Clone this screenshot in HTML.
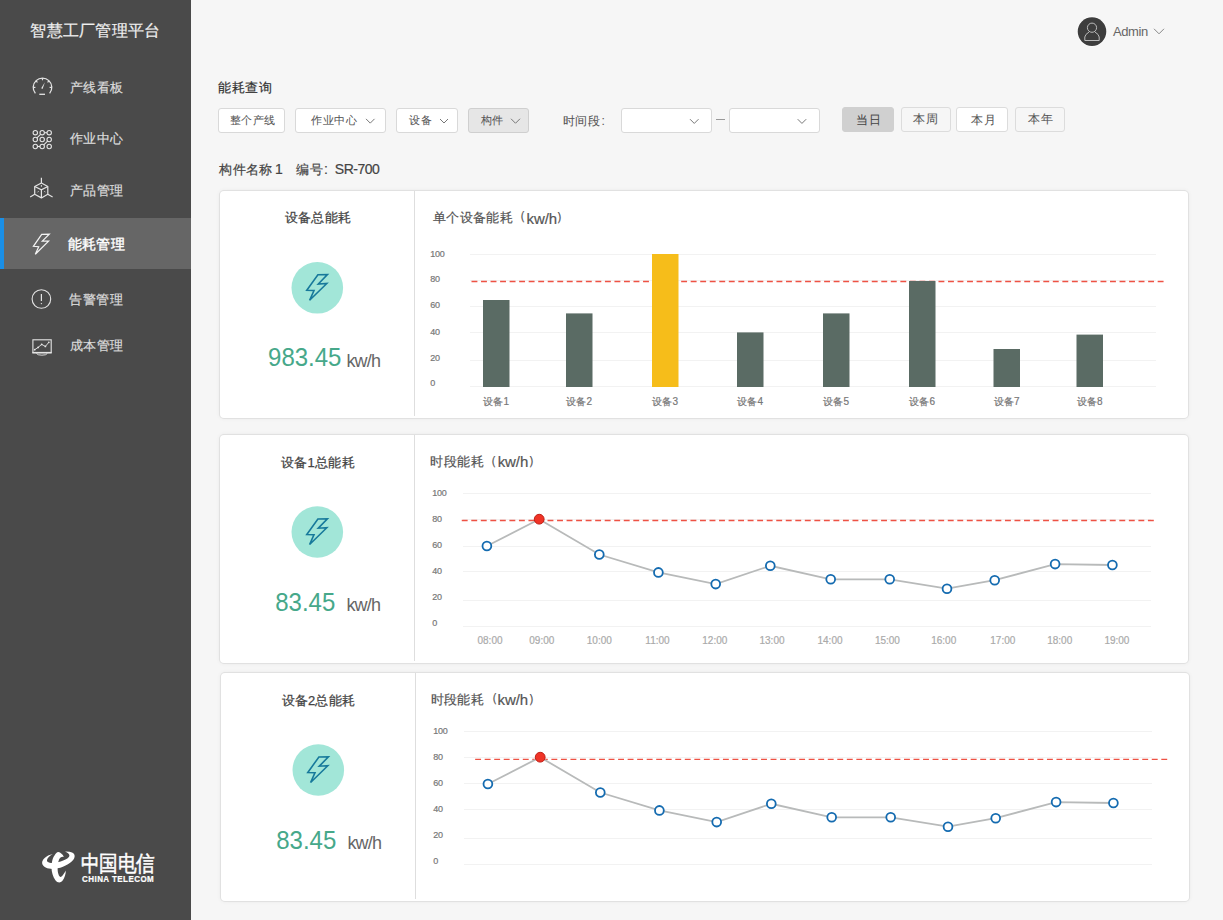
<!DOCTYPE html><html><head><meta charset="utf-8"><style>
html,body{margin:0;padding:0;}
body{width:1223px;height:920px;overflow:hidden;background:#f6f6f6;position:relative;font-family:"Liberation Sans",sans-serif;}
.t{position:absolute;white-space:nowrap;line-height:1;-webkit-text-stroke:0.2px currentColor;}
.c{width:200px;text-align:center;}
.sb{position:absolute;left:0;top:0;width:191px;height:920px;background:#4a4a4a;}
.act{position:absolute;left:0;top:218px;width:191px;height:51px;background:#666666;}
.actbar{position:absolute;left:0;top:218px;width:4px;height:51px;background:#1a8fe6;}
.box{position:absolute;box-sizing:border-box;border:1px solid #d9d9d9;border-radius:3px;background:#fff;}
.card{position:absolute;box-sizing:border-box;background:#fff;border-radius:4px;box-shadow:0 0 0 1px #e1e1e1,0 0 5px rgba(0,0,0,0.07);}
svg{position:absolute;left:0;top:0;}
</style></head><body>

<div class="sb"></div><div class="act"></div><div class="actbar"></div>
<div class="t" style="left:30.3px;top:22.8px;font-size:16px;color:#f0f0f0;font-weight:normal;letter-spacing:0.25px;">智慧工厂管理平台</div>
<div class="t" style="left:70px;top:81px;font-size:13px;color:#dcdcdc;font-weight:normal;letter-spacing:0.4px;">产线看板</div>
<div class="t" style="left:70px;top:132px;font-size:13px;color:#dcdcdc;font-weight:normal;letter-spacing:0.4px;">作业中心</div>
<div class="t" style="left:70px;top:183.7px;font-size:13px;color:#dcdcdc;font-weight:normal;letter-spacing:0.4px;">产品管理</div>
<div class="t" style="left:67.5px;top:237px;font-size:14px;color:#ffffff;font-weight:normal;-webkit-text-stroke:0.4px #fff;letter-spacing:0.35px;">能耗管理</div>
<div class="t" style="left:69.15px;top:292.5px;font-size:13px;color:#dcdcdc;font-weight:normal;letter-spacing:0.5px;">告警管理</div>
<div class="t" style="left:70px;top:339px;font-size:13px;color:#dcdcdc;font-weight:normal;letter-spacing:0.4px;">成本管理</div>
<div class="t" style="left:218px;top:80.8px;font-size:13px;color:#333;font-weight:normal;letter-spacing:0.7px;">能耗查询</div>
<div class="box" style="left:218px;top:108px;width:67px;height:25px;background:#fff;border-color:#d9d9d9"></div>
<div class="box" style="left:295px;top:108px;width:91px;height:25px;background:#fff;border-color:#d9d9d9"></div>
<div class="box" style="left:396px;top:108px;width:62px;height:25px;background:#fff;border-color:#d9d9d9"></div>
<div class="box" style="left:468px;top:108px;width:61px;height:25px;background:#e6e6e6;border-color:#cfcfcf"></div>
<div class="box" style="left:621px;top:108px;width:91px;height:25px;background:#fff;border-color:#d9d9d9"></div>
<div class="box" style="left:729px;top:108px;width:91px;height:25px;background:#fff;border-color:#d9d9d9"></div>
<div class="box" style="left:842px;top:107px;width:52px;height:25px;background:#d0d0d0;border-color:#d0d0d0"></div>
<div class="box" style="left:901px;top:107px;width:50px;height:25px;background:#f6f6f6;border-color:#dcdcdc"></div>
<div class="box" style="left:956px;top:107px;width:52px;height:25px;background:#ffffff;border-color:#dcdcdc"></div>
<div class="box" style="left:1015px;top:107px;width:50px;height:25px;background:#f6f6f6;border-color:#dcdcdc"></div>
<div class="t" style="left:229.5px;top:115px;font-size:11px;color:#555;font-weight:normal;letter-spacing:0.6px;-webkit-text-stroke:0.05px #555;">整个产线</div>
<div class="t" style="left:311.3px;top:115px;font-size:11px;color:#555;font-weight:normal;letter-spacing:0.6px;-webkit-text-stroke:0.05px #555;">作业中心</div>
<div class="t" style="left:409.2px;top:115px;font-size:11px;color:#555;font-weight:normal;letter-spacing:0.8px;-webkit-text-stroke:0.05px #555;">设备</div>
<div class="t" style="left:480.5px;top:115px;font-size:11px;color:#555;font-weight:normal;letter-spacing:0.8px;-webkit-text-stroke:0.05px #555;">构件</div>
<div class="t" style="left:563px;top:114.5px;font-size:12px;color:#555;font-weight:normal;letter-spacing:0.4px;-webkit-text-stroke:0.05px #555;">时间段</div>
<div class="t" style="left:601.5px;top:114.5px;font-size:12px;color:#555;font-weight:normal;-webkit-text-stroke:0.05px #555;">:</div>
<div class="t" style="left:856.2px;top:114px;font-size:12px;color:#444;font-weight:normal;-webkit-text-stroke:0.05px #444;letter-spacing:1px;">当日</div>
<div class="t" style="left:913.0px;top:112.6px;font-size:12px;color:#555;font-weight:normal;-webkit-text-stroke:0.05px #555;letter-spacing:0.8px;-webkit-text-stroke:0.05px #555;">本周</div>
<div class="t" style="left:970.8px;top:114px;font-size:12px;color:#555;font-weight:normal;-webkit-text-stroke:0.05px #555;letter-spacing:1px;">本月</div>
<div class="t" style="left:1028.3px;top:113px;font-size:12px;color:#555;font-weight:normal;-webkit-text-stroke:0.05px #555;letter-spacing:0.3px;">本年</div>
<div class="t" style="left:219.3px;top:162.7px;font-size:13px;color:#444;font-weight:normal;letter-spacing:0.3px;">构件名称</div>
<div class="t" style="left:275px;top:161.5px;font-size:14px;color:#444;font-weight:normal;">1</div>
<div class="t" style="left:295.9px;top:162.5px;font-size:13px;color:#444;font-weight:normal;letter-spacing:0.8px;">编号</div>
<div class="t" style="left:324px;top:161.5px;font-size:14px;color:#444;font-weight:normal;">:</div>
<div class="t" style="left:334.85px;top:161.5px;font-size:14px;color:#444;font-weight:normal;letter-spacing:-0.5px;">SR-700</div>
<div class="card" style="left:220px;top:191px;width:968px;height:227px"></div>
<div class="card" style="left:220px;top:435px;width:968px;height:228px"></div>
<div class="card" style="left:221px;top:673px;width:968px;height:228px"></div>
<svg width="1223" height="920" viewBox="0 0 1223 920"><polyline points="366,118.875 370.25,123.125 374.5,118.875" fill="none" stroke="#777" stroke-width="1"/><polyline points="440,119.0 444.0,123.0 448,119.0" fill="none" stroke="#777" stroke-width="1"/><polyline points="511,118.75 515.5,123.25 520,118.75" fill="none" stroke="#777" stroke-width="1"/><polyline points="690,119.175 694.25,123.425 698.5,119.175" fill="none" stroke="#777" stroke-width="1"/><polyline points="797.7,119.175 801.95,123.425 806.2,119.175" fill="none" stroke="#777" stroke-width="1"/><polyline points="1154,28.8 1159.0,33.8 1164,28.8" fill="none" stroke="#888" stroke-width="1"/><line x1="716" y1="119.5" x2="725" y2="119.5" stroke="#999" stroke-width="1"/><circle cx="1092" cy="31.6" r="15" fill="#fff"/><circle cx="1092" cy="31.6" r="14.3" fill="#3d3d3d"/><circle cx="1092" cy="27.7" r="4.6" fill="none" stroke="#bbb" stroke-width="1"/><path d="M1084.8,40.5 L1084.8,37 Q1085,34.5 1089,32" fill="none" stroke="#bbb" stroke-width="1"/><path d="M1099.2,40.5 L1099.2,37 Q1099,34.5 1095,32" fill="none" stroke="#bbb" stroke-width="1"/><line x1="1084.8" y1="40.5" x2="1099.2" y2="40.5" stroke="#bbb" stroke-width="1"/><line x1="414.5" y1="191" x2="414.5" y2="416" stroke="#dedede" stroke-width="1"/><line x1="414.5" y1="435" x2="414.5" y2="661" stroke="#dedede" stroke-width="1"/><line x1="415.5" y1="673" x2="415.5" y2="899" stroke="#dedede" stroke-width="1"/><circle cx="317.3" cy="287.8" r="25.8" fill="#a2e6d8"/><polygon points="306.8,290.3 317.9,274.8 327.4,274.6 318.3,284.0 326.8,283.5 309.6,300.3 314.0,290.5" fill="none" stroke="#17799b" stroke-width="1.6" stroke-linejoin="miter"/><circle cx="317.3" cy="532" r="25.8" fill="#a2e6d8"/><polygon points="306.8,534.5 317.9,519.0 327.4,518.8 318.3,528.2 326.8,527.7 309.6,544.5 314.0,534.7" fill="none" stroke="#17799b" stroke-width="1.6" stroke-linejoin="miter"/><circle cx="318.3" cy="770" r="25.8" fill="#a2e6d8"/><polygon points="307.8,772.5 318.9,757.0 328.4,756.8 319.3,766.2 327.8,765.7 310.6,782.5 315.0,772.7" fill="none" stroke="#17799b" stroke-width="1.6" stroke-linejoin="miter"/><line x1="470" y1="254.5" x2="1156" y2="254.5" stroke="#f2f2f2" stroke-width="1"/><line x1="470" y1="280.5" x2="1156" y2="280.5" stroke="#f2f2f2" stroke-width="1"/><line x1="470" y1="306.5" x2="1156" y2="306.5" stroke="#f2f2f2" stroke-width="1"/><line x1="470" y1="332.5" x2="1156" y2="332.5" stroke="#f2f2f2" stroke-width="1"/><line x1="470" y1="360.5" x2="1156" y2="360.5" stroke="#f2f2f2" stroke-width="1"/><line x1="470" y1="386.5" x2="1156" y2="386.5" stroke="#f2f2f2" stroke-width="1"/><line x1="471.5" y1="281.5" x2="1165.5" y2="281.5" stroke="#ee5244" stroke-width="1.35" stroke-dasharray="5.9,3.63"/><rect x="483" y="300" width="26.5" height="87" fill="#5a6b64"/><rect x="566" y="313.4" width="26.5" height="73.60000000000002" fill="#5a6b64"/><rect x="652" y="254" width="26.5" height="133" fill="#f6bd1a"/><rect x="737" y="332.4" width="26.5" height="54.60000000000002" fill="#5a6b64"/><rect x="823" y="313.4" width="26.5" height="73.60000000000002" fill="#5a6b64"/><rect x="909" y="281" width="26.5" height="106" fill="#5a6b64"/><rect x="993.5" y="349" width="26.5" height="38" fill="#5a6b64"/><rect x="1076.5" y="334.6" width="26.5" height="52.39999999999998" fill="#5a6b64"/><line x1="463" y1="493.5" x2="1151" y2="493.5" stroke="#f2f2f2" stroke-width="1"/><line x1="463" y1="519.5" x2="1151" y2="519.5" stroke="#f2f2f2" stroke-width="1"/><line x1="463" y1="546.5" x2="1151" y2="546.5" stroke="#f2f2f2" stroke-width="1"/><line x1="463" y1="571.5" x2="1151" y2="571.5" stroke="#f2f2f2" stroke-width="1"/><line x1="463" y1="600.5" x2="1151" y2="600.5" stroke="#f2f2f2" stroke-width="1"/><line x1="463" y1="626.5" x2="1151" y2="626.5" stroke="#f2f2f2" stroke-width="1"/><line x1="461.75" y1="520.5" x2="1155.25" y2="520.5" stroke="#ee5244" stroke-width="1.35" stroke-dasharray="5.9,3.63"/><polyline points="486.9,546.0 539.2,519.2 599.3,554.5 658.4,572.4 715.7,584.1 770.3,565.8 830.7,579.3 889.7,579.3 947.0,588.7 994.7,580.2 1055.1,564.1 1112.4,565.0" fill="none" stroke="#b8baba" stroke-width="1.8"/><circle cx="486.9" cy="546" r="4.4" fill="#fff" stroke="#146bb0" stroke-width="1.8"/><circle cx="539.2" cy="519.2" r="4.9" fill="#f03326" stroke="#c01f16" stroke-width="1"/><circle cx="599.3" cy="554.5" r="4.4" fill="#fff" stroke="#146bb0" stroke-width="1.8"/><circle cx="658.4" cy="572.4" r="4.4" fill="#fff" stroke="#146bb0" stroke-width="1.8"/><circle cx="715.7" cy="584.1" r="4.4" fill="#fff" stroke="#146bb0" stroke-width="1.8"/><circle cx="770.3" cy="565.8" r="4.4" fill="#fff" stroke="#146bb0" stroke-width="1.8"/><circle cx="830.7" cy="579.3" r="4.4" fill="#fff" stroke="#146bb0" stroke-width="1.8"/><circle cx="889.7" cy="579.3" r="4.4" fill="#fff" stroke="#146bb0" stroke-width="1.8"/><circle cx="947" cy="588.7" r="4.4" fill="#fff" stroke="#146bb0" stroke-width="1.8"/><circle cx="994.7" cy="580.2" r="4.4" fill="#fff" stroke="#146bb0" stroke-width="1.8"/><circle cx="1055.1" cy="564.1" r="4.4" fill="#fff" stroke="#146bb0" stroke-width="1.8"/><circle cx="1112.4" cy="565" r="4.4" fill="#fff" stroke="#146bb0" stroke-width="1.8"/><line x1="464" y1="731.5" x2="1152" y2="731.5" stroke="#f2f2f2" stroke-width="1"/><line x1="464" y1="757.5" x2="1152" y2="757.5" stroke="#f2f2f2" stroke-width="1"/><line x1="464" y1="783.5" x2="1152" y2="783.5" stroke="#f2f2f2" stroke-width="1"/><line x1="464" y1="809.5" x2="1152" y2="809.5" stroke="#f2f2f2" stroke-width="1"/><line x1="464" y1="838.5" x2="1152" y2="838.5" stroke="#f2f2f2" stroke-width="1"/><line x1="464" y1="864.5" x2="1152" y2="864.5" stroke="#f2f2f2" stroke-width="1"/><line x1="475.15" y1="759.4" x2="1168.45" y2="759.4" stroke="#ee5244" stroke-width="1.35" stroke-dasharray="5.9,3.63"/><polyline points="487.9,784.0 540.2,757.2 600.3,792.5 659.4,810.4 716.7,822.1 771.3,803.8 831.7,817.3 890.7,817.3 948.0,826.7 995.7,818.2 1056.1,802.1 1113.4,803.0" fill="none" stroke="#b8baba" stroke-width="1.8"/><circle cx="487.9" cy="784" r="4.4" fill="#fff" stroke="#146bb0" stroke-width="1.8"/><circle cx="540.2" cy="757.2" r="4.9" fill="#f03326" stroke="#c01f16" stroke-width="1"/><circle cx="600.3" cy="792.5" r="4.4" fill="#fff" stroke="#146bb0" stroke-width="1.8"/><circle cx="659.4" cy="810.4" r="4.4" fill="#fff" stroke="#146bb0" stroke-width="1.8"/><circle cx="716.7" cy="822.1" r="4.4" fill="#fff" stroke="#146bb0" stroke-width="1.8"/><circle cx="771.3" cy="803.8" r="4.4" fill="#fff" stroke="#146bb0" stroke-width="1.8"/><circle cx="831.7" cy="817.3" r="4.4" fill="#fff" stroke="#146bb0" stroke-width="1.8"/><circle cx="890.7" cy="817.3" r="4.4" fill="#fff" stroke="#146bb0" stroke-width="1.8"/><circle cx="948" cy="826.7" r="4.4" fill="#fff" stroke="#146bb0" stroke-width="1.8"/><circle cx="995.7" cy="818.2" r="4.4" fill="#fff" stroke="#146bb0" stroke-width="1.8"/><circle cx="1056.1" cy="802.1" r="4.4" fill="#fff" stroke="#146bb0" stroke-width="1.8"/><circle cx="1113.4" cy="803" r="4.4" fill="#fff" stroke="#146bb0" stroke-width="1.8"/><path d="M35.38,93.38 A9.3,9.3 0 1 1 49.62,93.38" fill="none" stroke="#e4e4e4" stroke-width="1.3"/><line x1="33.20" y1="87.40" x2="35.40" y2="87.40" stroke="#e4e4e4" stroke-width="1.2"/><line x1="35.92" y1="80.82" x2="37.48" y2="82.38" stroke="#e4e4e4" stroke-width="1.2"/><line x1="42.50" y1="78.10" x2="42.50" y2="80.30" stroke="#e4e4e4" stroke-width="1.2"/><line x1="49.08" y1="80.82" x2="47.52" y2="82.38" stroke="#e4e4e4" stroke-width="1.2"/><line x1="51.80" y1="87.40" x2="49.60" y2="87.40" stroke="#e4e4e4" stroke-width="1.2"/><polygon points="41.2,88.2 42.6,89.0 44.9,82.2" fill="#e4e4e4"/><line x1="39.3" y1="94.3" x2="45" y2="94.3" stroke="#e4e4e4" stroke-width="1.3"/><circle cx="35.3" cy="132.7" r="2.2" fill="none" stroke="#e4e4e4" stroke-width="1.1"/><circle cx="42.2" cy="132.7" r="2.2" fill="none" stroke="#e4e4e4" stroke-width="1.1"/><circle cx="49.2" cy="132.7" r="2.2" fill="none" stroke="#e4e4e4" stroke-width="1.1"/><circle cx="35.3" cy="139.5" r="2.2" fill="none" stroke="#e4e4e4" stroke-width="1.1"/><circle cx="42.2" cy="139.5" r="2.2" fill="none" stroke="#e4e4e4" stroke-width="1.1"/><circle cx="49.2" cy="139.5" r="2.2" fill="none" stroke="#e4e4e4" stroke-width="1.1"/><circle cx="35.3" cy="146.5" r="2.2" fill="none" stroke="#e4e4e4" stroke-width="1.1"/><circle cx="42.2" cy="146.5" r="2.2" fill="none" stroke="#e4e4e4" stroke-width="1.1"/><circle cx="49.2" cy="146.5" r="2.2" fill="none" stroke="#e4e4e4" stroke-width="1.1"/><line x1="44.4" y1="132.7" x2="47" y2="132.7" stroke="#e4e4e4" stroke-width="1.1"/><line x1="40.6" y1="134.3" x2="36.9" y2="137.9" stroke="#e4e4e4" stroke-width="1.1"/><line x1="37.5" y1="146.5" x2="40" y2="146.5" stroke="#e4e4e4" stroke-width="1.1"/><line x1="43.8" y1="144.9" x2="47.6" y2="141.1" stroke="#e4e4e4" stroke-width="1.1"/><polygon points="41.4,183 47.8,186.5 47.8,194.3 41.4,197.9 34.7,194.3 34.7,186.5" fill="none" stroke="#e4e4e4" stroke-width="1.2" stroke-linejoin="round"/><polyline points="34.7,186.5 41.4,189.8 47.8,186.5" fill="none" stroke="#e4e4e4" stroke-width="1.2"/><line x1="41.4" y1="189.8" x2="41.4" y2="197.9" stroke="#e4e4e4" stroke-width="1.2"/><line x1="41.4" y1="177.8" x2="41.4" y2="183" stroke="#e4e4e4" stroke-width="1.2"/><line x1="34.7" y1="194.3" x2="30.2" y2="197" stroke="#e4e4e4" stroke-width="1.2"/><line x1="47.8" y1="194.3" x2="52.6" y2="197" stroke="#e4e4e4" stroke-width="1.2"/><line x1="41.4" y1="185" x2="41.4" y2="186.8" stroke="#e4e4e4" stroke-width="0.9"/><line x1="37.5" y1="192.3" x2="38.6" y2="191.2" stroke="#e4e4e4" stroke-width="0.9"/><line x1="44.4" y1="191.2" x2="45.3" y2="192.2" stroke="#e4e4e4" stroke-width="0.9"/><polygon points="41.7,234.4 49.3,234.2 42.3,241.2 48.6,241.2 35.3,254.3 38.7,246.7 33.4,246.3" fill="none" stroke="#f4f4f4" stroke-width="1.2" stroke-linejoin="miter"/><circle cx="41.4" cy="299" r="9.3" fill="none" stroke="#e4e4e4" stroke-width="1.1"/><line x1="41.4" y1="294" x2="41.4" y2="301" stroke="#e4e4e4" stroke-width="1.2"/><circle cx="41.4" cy="303.6" r="0.7" fill="#e4e4e4"/><rect x="32.9" y="339.8" width="18.3" height="13" fill="none" stroke="#e4e4e4" stroke-width="1.1"/><line x1="32.4" y1="352.6" x2="51.6" y2="352.6" stroke="#e4e4e4" stroke-width="1.4"/><path d="M36.5,353.5 Q37.5,355.2 41.9,355.2 Q46.3,355.2 47.3,353.5" fill="none" stroke="#e4e4e4" stroke-width="0.9"/><polyline points="34.7,349.7 38.1,347.4 41.7,344.4 45.4,346.4 48.8,342.3" fill="none" stroke="#e4e4e4" stroke-width="0.9"/><circle cx="34.7" cy="349.7" r="0.9" fill="#e4e4e4"/><circle cx="38.1" cy="347.4" r="0.9" fill="#e4e4e4"/><circle cx="41.7" cy="344.4" r="0.9" fill="#e4e4e4"/><circle cx="45.4" cy="346.4" r="0.9" fill="#e4e4e4"/><circle cx="48.8" cy="342.3" r="0.9" fill="#e4e4e4"/><path d="M52.8,853.9 C46,855.5 41.5,859.5 42.2,863.5 C43,867.5 49,869.5 55,868.8 C62,868 70,864 73.5,859.5 C76,856 74.5,852.5 69.5,851.8 L65,851.6 C69.5,853.5 70.5,856 68.4,857.5 C66,860 60,862 54.5,862.8 C49.5,863.4 46.5,862 47,860 C47.5,857.5 50,855.5 52.8,853.9 Z" fill="#fff"/><path d="M58.4,852.1 C60.5,852.6 62.8,854.5 63.9,856.9 C62.5,856.2 60.5,857 59.3,859 C58,861.5 57.5,865.5 57.6,869 C57.7,872.5 58.8,876.5 60.4,876.9 C62,877.2 64.5,873 65.8,870.6 C65.9,874 64.5,878.5 62.3,881 C60.5,883 57.5,883 55.4,880.2 C53,877 51.5,872 51.5,867.6 C51.5,862 53,857 54.5,855.4 C55.8,853.5 57,852 58.4,852.1 Z" fill="#fff"/></svg>
<div class="t" style="left:284.9px;top:211.3px;font-size:13px;color:#444;font-weight:normal;letter-spacing:0.3px;-webkit-text-stroke:0.25px #444;">设备总能耗</div>
<div class="t" style="left:280.95px;top:456.3px;font-size:13px;color:#444;font-weight:normal;letter-spacing:0.3px;-webkit-text-stroke:0.25px #444;">设备1总能耗</div>
<div class="t" style="left:281.5px;top:694px;font-size:13px;color:#444;font-weight:normal;letter-spacing:0.2px;-webkit-text-stroke:0.25px #444;">设备2总能耗</div>
<div class="t" style="left:268.05px;top:346px;font-size:24px;color:#46a88a;font-weight:normal;transform:scaleY(1.09);transform-origin:0 100%;-webkit-text-stroke:0;">983.45</div>
<div class="t" style="left:346.4px;top:352px;font-size:18px;color:#666;font-weight:normal;-webkit-text-stroke:0;letter-spacing:-0.8px;">kw/h</div>
<div class="t" style="left:275.2px;top:591px;font-size:24px;color:#46a88a;font-weight:normal;transform:scaleY(1.09);transform-origin:0 100%;-webkit-text-stroke:0;">83.45</div>
<div class="t" style="left:346.4px;top:596.35px;font-size:18px;color:#666;font-weight:normal;-webkit-text-stroke:0;letter-spacing:-0.8px;">kw/h</div>
<div class="t" style="left:276.2px;top:829px;font-size:24px;color:#46a88a;font-weight:normal;transform:scaleY(1.09);transform-origin:0 100%;-webkit-text-stroke:0;">83.45</div>
<div class="t" style="left:347.4px;top:834.35px;font-size:18px;color:#666;font-weight:normal;-webkit-text-stroke:0;letter-spacing:-0.8px;">kw/h</div>
<div class="t" style="left:432.7px;top:211.3px;font-size:13px;color:#555;font-weight:normal;letter-spacing:0.45px;">单个设备能耗</div>
<div class="t" style="left:512.9px;top:209.3px;font-size:13px;color:#555;font-weight:normal;">（</div>
<div class="t" style="left:526.5px;top:211.05px;font-size:15px;color:#555;font-weight:normal;letter-spacing:-0.1px;">kw/h</div>
<div class="t" style="left:555.7px;top:209.85px;font-size:13px;color:#555;font-weight:normal;">）</div>
<div class="t" style="left:430.4px;top:455px;font-size:13px;color:#555;font-weight:normal;letter-spacing:0.45px;">时段能耗</div>
<div class="t" style="left:484.1px;top:453.75px;font-size:13px;color:#555;font-weight:normal;">（</div>
<div class="t" style="left:497.7px;top:454.35px;font-size:15px;color:#555;font-weight:normal;letter-spacing:-0.1px;">kw/h</div>
<div class="t" style="left:527.7px;top:454.25px;font-size:13px;color:#555;font-weight:normal;">）</div>
<div class="t" style="left:430.55px;top:693px;font-size:13px;color:#555;font-weight:normal;letter-spacing:0.45px;">时段能耗</div>
<div class="t" style="left:485.4px;top:691.2px;font-size:13px;color:#555;font-weight:normal;">（</div>
<div class="t" style="left:497.6px;top:692.15px;font-size:15px;color:#555;font-weight:normal;letter-spacing:-0.1px;">kw/h</div>
<div class="t" style="left:528px;top:691.6px;font-size:13px;color:#555;font-weight:normal;">）</div>
<div class="t" style="left:430.3px;top:249.7px;font-size:9px;color:#777;font-weight:normal;letter-spacing:-0.3px;">100</div>
<div class="t" style="left:430.3px;top:275.2px;font-size:9px;color:#777;font-weight:normal;letter-spacing:-0.3px;">80</div>
<div class="t" style="left:430.3px;top:301.1px;font-size:9px;color:#777;font-weight:normal;letter-spacing:-0.3px;">60</div>
<div class="t" style="left:430.3px;top:327.9px;font-size:9px;color:#777;font-weight:normal;letter-spacing:-0.3px;">40</div>
<div class="t" style="left:430.3px;top:353.8px;font-size:9px;color:#777;font-weight:normal;letter-spacing:-0.3px;">20</div>
<div class="t" style="left:430.3px;top:379.3px;font-size:9px;color:#777;font-weight:normal;letter-spacing:-0.3px;">0</div>
<div class="t" style="left:432.3px;top:489.4px;font-size:9px;color:#777;font-weight:normal;letter-spacing:-0.3px;">100</div>
<div class="t" style="left:432.3px;top:515.2px;font-size:9px;color:#777;font-weight:normal;letter-spacing:-0.3px;">80</div>
<div class="t" style="left:432.3px;top:541.1px;font-size:9px;color:#777;font-weight:normal;letter-spacing:-0.3px;">60</div>
<div class="t" style="left:432.3px;top:567.4px;font-size:9px;color:#777;font-weight:normal;letter-spacing:-0.3px;">40</div>
<div class="t" style="left:432.3px;top:593.4px;font-size:9px;color:#777;font-weight:normal;letter-spacing:-0.3px;">20</div>
<div class="t" style="left:432.3px;top:619.3px;font-size:9px;color:#777;font-weight:normal;letter-spacing:-0.3px;">0</div>
<div class="t" style="left:433.3px;top:727.4px;font-size:9px;color:#777;font-weight:normal;letter-spacing:-0.3px;">100</div>
<div class="t" style="left:433.3px;top:753.2px;font-size:9px;color:#777;font-weight:normal;letter-spacing:-0.3px;">80</div>
<div class="t" style="left:433.3px;top:779.1px;font-size:9px;color:#777;font-weight:normal;letter-spacing:-0.3px;">60</div>
<div class="t" style="left:433.3px;top:805.4px;font-size:9px;color:#777;font-weight:normal;letter-spacing:-0.3px;">40</div>
<div class="t" style="left:433.3px;top:831.4px;font-size:9px;color:#777;font-weight:normal;letter-spacing:-0.3px;">20</div>
<div class="t" style="left:433.3px;top:857.3px;font-size:9px;color:#777;font-weight:normal;letter-spacing:-0.3px;">0</div>
<div class="t c" style="left:396.25px;top:396.8px;font-size:10px;color:#777;font-weight:normal;">设备1</div>
<div class="t c" style="left:479.25px;top:396.8px;font-size:10px;color:#777;font-weight:normal;">设备2</div>
<div class="t c" style="left:565.25px;top:396.8px;font-size:10px;color:#777;font-weight:normal;">设备3</div>
<div class="t c" style="left:650.25px;top:396.8px;font-size:10px;color:#777;font-weight:normal;">设备4</div>
<div class="t c" style="left:736.25px;top:396.8px;font-size:10px;color:#777;font-weight:normal;">设备5</div>
<div class="t c" style="left:822.25px;top:396.8px;font-size:10px;color:#777;font-weight:normal;">设备6</div>
<div class="t c" style="left:906.75px;top:396.8px;font-size:10px;color:#777;font-weight:normal;">设备7</div>
<div class="t c" style="left:989.75px;top:396.8px;font-size:10px;color:#777;font-weight:normal;">设备8</div>
<div class="t c" style="left:390px;top:636px;font-size:10px;color:#aaa;font-weight:normal;">08:00</div>
<div class="t c" style="left:441.79999999999995px;top:636px;font-size:10px;color:#aaa;font-weight:normal;">09:00</div>
<div class="t c" style="left:499.29999999999995px;top:636px;font-size:10px;color:#aaa;font-weight:normal;">10:00</div>
<div class="t c" style="left:557.5px;top:636px;font-size:10px;color:#aaa;font-weight:normal;">11:00</div>
<div class="t c" style="left:614.8px;top:636px;font-size:10px;color:#aaa;font-weight:normal;">12:00</div>
<div class="t c" style="left:672px;top:636px;font-size:10px;color:#aaa;font-weight:normal;">13:00</div>
<div class="t c" style="left:730px;top:636px;font-size:10px;color:#aaa;font-weight:normal;">14:00</div>
<div class="t c" style="left:787.4px;top:636px;font-size:10px;color:#aaa;font-weight:normal;">15:00</div>
<div class="t c" style="left:843.7px;top:636px;font-size:10px;color:#aaa;font-weight:normal;">16:00</div>
<div class="t c" style="left:902.8px;top:636px;font-size:10px;color:#aaa;font-weight:normal;">17:00</div>
<div class="t c" style="left:959.7px;top:636px;font-size:10px;color:#aaa;font-weight:normal;">18:00</div>
<div class="t c" style="left:1016.9000000000001px;top:636px;font-size:10px;color:#aaa;font-weight:normal;">19:00</div>
<div class="t" style="left:1113px;top:24.9px;font-size:13px;color:#666;font-weight:normal;letter-spacing:-0.4px;-webkit-text-stroke:0;">Admin</div>
<div class="t" style="left:81px;top:852px;font-size:19px;color:#fff;font-weight:normal;letter-spacing:-0.6px;transform:scaleY(1.18);transform-origin:0 0;-webkit-text-stroke:0.45px #fff;">中国电信</div>
<div class="t" style="left:82.0px;top:874.6px;font-size:8px;color:#fff;font-weight:bold;letter-spacing:0.45px;transform:scaleY(1.1);transform-origin:0 0;">CHINA TELECOM</div>
</body></html>
